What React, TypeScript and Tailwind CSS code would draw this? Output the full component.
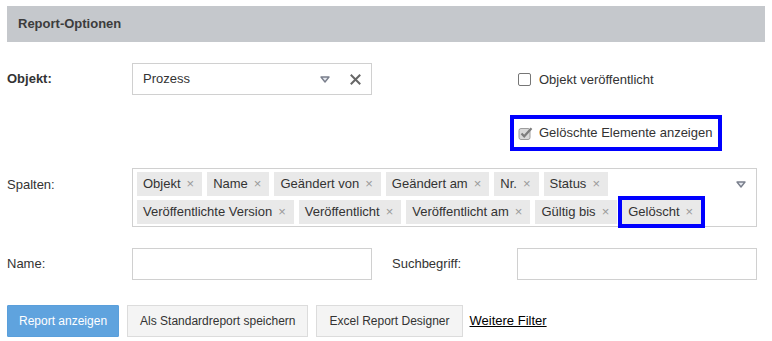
import { ReactNode } from "react";

const font = "font-['Liberation_Sans',Arial,sans-serif]";

const columns = [
  "Objekt",
  "Name",
  "Geändert von",
  "Geändert am",
  "Nr.",
  "Status",
  "Veröffentlichte Version",
  "Veröffentlicht",
  "Veröffentlicht am",
  "Gültig bis",
];

function Caret() {
  return (
    <svg width="10" height="7" viewBox="0 0 10 7">
      <path d="M1 1 L9 1 L5 6 Z" fill="#e6e9f0" stroke="#7a7f8c" strokeWidth="1.4" strokeLinejoin="round" />
    </svg>
  );
}

function ClearIcon() {
  return (
    <svg width="11" height="11" viewBox="0 0 11 11">
      <path d="M1.5 1.5 L9.5 9.5 M9.5 1.5 L1.5 9.5" stroke="#666" strokeWidth="2" strokeLinecap="square" />
    </svg>
  );
}

function Tag({ children }: { children: ReactNode }) {
  return (
    <span className="flex h-[24px] items-center gap-[6px] bg-[#e9e9e9] pl-[6px] pr-[8px] text-[#333]">
      {children}
      <span className="text-[13px] text-[#9a9a9a]">×</span>
    </span>
  );
}

function Input({ className = "" }: { className?: string }) {
  return <div className={`h-[32px] w-[240px] border border-[#d0d0d0] bg-white ${className}`} />;
}

export default function App() {
  return (
    <div className={`${font} h-[341px] w-[772px] bg-white px-[7px] pt-[6px] text-[13px] text-[#333]`}>
      <div className="flex h-[36px] w-[758px] items-center bg-[#c5c8cc] px-[11px] font-bold text-[#3c3c3c]">
        Report-Optionen
      </div>

      <div className="mt-[21px] flex">
        <div className="flex h-[32px] w-[125px] items-center font-bold">Objekt:</div>
        <div className="flex h-[32px] w-[240px] items-center border border-[#d0d0d0] pl-[10px] pr-[10px]">
          <span className="flex-1">Prozess</span>
          <span className="mr-[20px] flex items-center">
            <Caret />
          </span>
          <ClearIcon />
        </div>
        <div className="ml-[138px] flex flex-col">
          <label className="flex h-[33px] items-center gap-[8px] border-4 border-transparent px-[4px]">
            <span className="h-[13px] w-[13px] rounded-[2px] border border-[#767676] bg-white" />
            Objekt veröffentlicht
          </label>
          <label className="mt-[19px] flex h-[36px] items-center gap-[6px] border-4 border-[#0000ff] px-[4px] pr-[6px]">
            <svg width="15" height="15" viewBox="0 0 15 15">
              <rect x="1" y="2.5" width="11" height="11" rx="2" fill="#d9d9d9" stroke="#9d9d9d" />
              <path d="M3.5 7.5 L6.2 10.3 L13.5 2.2" fill="none" stroke="#7d7d7d" strokeWidth="2.2" />
            </svg>
            Gelöschte Elemente anzeigen
          </label>
        </div>
      </div>

      <div className="mt-[17px] flex">
        <div className="flex h-[34px] w-[125px] items-center">Spalten:</div>
        <div className="flex h-[59px] w-[625px] items-start border border-[#d0d0d0] pl-[4px] pr-[10px] pt-[3px]">
          <div className="flex flex-1 flex-wrap gap-x-[5px] gap-y-[4px]">
            {columns.map((c) => (
              <Tag key={c}>{c}</Tag>
            ))}
            <span className="outline-4 outline-[#0000ff]">
              <Tag>Gelöscht</Tag>
            </span>
          </div>
          <span className="mt-[9px] flex">
            <Caret />
          </span>
        </div>
      </div>

      <div className="mt-[21px] flex items-center">
        <div className="w-[125px]">Name:</div>
        <Input />
        <div className="ml-[20px] w-[125px]">Suchbegriff:</div>
        <Input />
      </div>

      <div className="mt-[25px] flex items-center gap-[8px] text-[12px]">
        <button className="h-[32px] rounded-[1px] border border-[#5a9fdb] bg-[#5fa3de] px-[11px] text-white">
          Report anzeigen
        </button>
        <button className="h-[32px] border border-[#dcdcdc] bg-[#f4f4f4] px-[12px] text-[#333]">
          Als Standardreport speichern
        </button>
        <button className="h-[32px] border border-[#dcdcdc] bg-[#f4f4f4] px-[12px] text-[#333]">
          Excel Report Designer
        </button>
        <a className="ml-[-1px] text-[13px] text-black underline">Weitere Filter</a>
      </div>
    </div>
  );
}
